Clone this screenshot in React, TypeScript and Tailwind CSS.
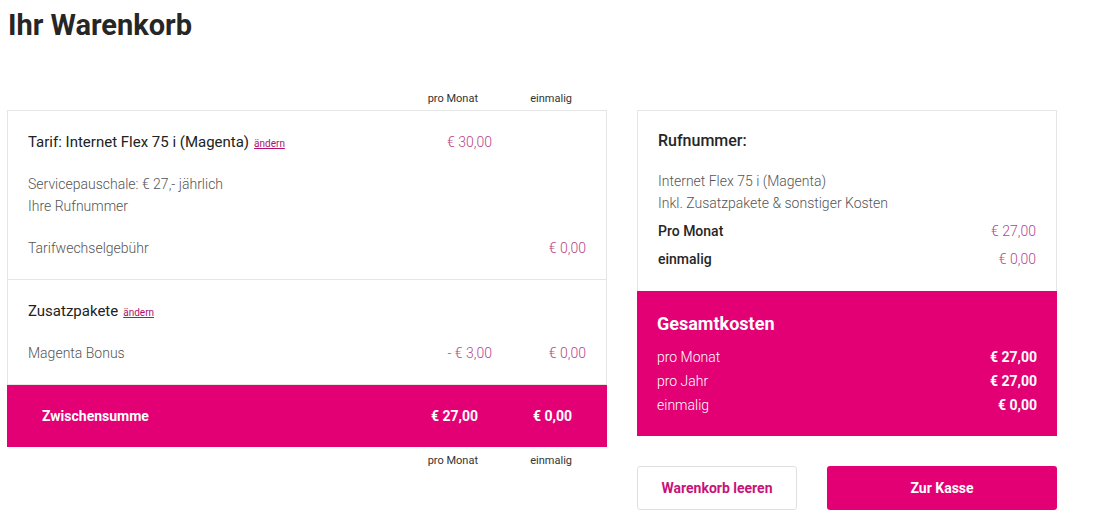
import React from "react";

const price = "text-[#b8448a] font-light";

function ColLabels({ className = "" }: { className?: string }) {
  return (
    <div className={`flex justify-end pr-[35px] text-[11px] text-[#333] ${className}`}>
      <span className="w-[94px] text-right">pro Monat</span>
      <span className="w-[94px] text-right">einmalig</span>
    </div>
  );
}

function Row({
  label,
  month,
  once,
  className = "",
  labelClass = "",
}: {
  label: React.ReactNode;
  month?: string;
  once?: string;
  className?: string;
  labelClass?: string;
}) {
  return (
    <div className={`flex h-[22px] items-center ${className}`}>
      <div className={`flex-1 flex items-baseline ${labelClass}`}>{label}</div>
      <div className={`w-[94px] text-right ${price}`}>{month}</div>
      <div className={`w-[94px] text-right ${price}`}>{once}</div>
    </div>
  );
}

function Aendern() {
  return (
    <a className="ml-[5px] text-[10px] text-[#b0106e] underline font-normal">
      ändern
    </a>
  );
}

export default function App() {
  return (
    <div className="min-h-screen bg-white font-['Roboto','Liberation_Sans',sans-serif] text-[14px] text-[#333]">
      <h1 className="pl-[8px] pt-[8px] text-[29px] font-bold leading-[34px] text-[#262626]">
        Ihr Warenkorb
      </h1>

      <div className="mt-[46px] flex gap-[30px] pl-[7px]">
        {/* left column */}
        <div className="w-[600px]">
          <ColLabels className="h-[22px] items-center" />
          <div className="border border-[#e6e6e6]">
            <div className="px-[20px] pt-[20px] pb-[20px]">
              <Row
                labelClass="text-[#222] text-[15px]"
                label={
                  <>
                    Tarif: Internet Flex 75 i (Magenta)
                    <Aendern />
                  </>
                }
                month="€ 30,00"
              />
              <div className="mt-[20px] font-light text-[#555] leading-[22px]">
                <div>Servicepauschale: € 27,- jährlich</div>
                <div>Ihre Rufnummer</div>
              </div>
              <Row
                className="mt-[20px]"
                labelClass="font-light text-[#555]"
                label="Tarifwechselgebühr"
                once="€ 0,00"
              />
            </div>
            <div className="border-t border-[#e6e6e6] px-[20px] pt-[20px] pb-[20px]">
              <Row
                labelClass="text-[#222] text-[15px]"
                label={
                  <>
                    Zusatzpakete
                    <Aendern />
                  </>
                }
              />
              <Row
                className="mt-[20px]"
                labelClass="font-light text-[#555]"
                label="Magenta Bonus"
                month="- € 3,00"
                once="€ 0,00"
              />
            </div>
          </div>
          <div className="flex h-[62px] items-center bg-[#e20074] pl-[35px] pr-[35px] text-white font-bold">
            <div className="flex-1">Zwischensumme</div>
            <div className="w-[94px] text-right">€ 27,00</div>
            <div className="w-[94px] text-right">€ 0,00</div>
          </div>
          <ColLabels className="mt-[6px] leading-[16px]" />
        </div>

        {/* right column */}
        <div className="mt-[22px] w-[420px]">
          <div className="border border-b-0 border-[#e6e6e6] px-[20px] pt-[19px] pb-[18px]">
            <div className="text-[16px] font-medium leading-[22px] text-[#262626]">
              Rufnummer:
            </div>
            <div className="mt-[18px] font-light leading-[22px] text-[#555]">
              <div>Internet Flex 75 i (Magenta)</div>
              <div>Inkl. Zusatzpakete &amp; sonstiger Kosten</div>
            </div>
            <div className="mt-[3px] flex justify-between leading-[28px]">
              <span className="font-medium text-[#262626]">Pro Monat</span>
              <span className={price}>€ 27,00</span>
            </div>
            <div className="flex justify-between leading-[28px]">
              <span className="font-medium text-[#262626]">einmalig</span>
              <span className={price}>€ 0,00</span>
            </div>
          </div>
          <div className="bg-[#e20074] px-[20px] pt-[21px] pb-[19px] text-white">
            <div className="text-[18px] font-bold leading-[24px]">Gesamtkosten</div>
            <div className="mt-[9px] leading-[24px]">
              {[
                ["pro Monat", "€ 27,00"],
                ["pro Jahr", "€ 27,00"],
                ["einmalig", "€ 0,00"],
              ].map(([l, v]) => (
                <div key={l} className="flex justify-between">
                  <span className="font-light">{l}</span>
                  <span className="font-bold">{v}</span>
                </div>
              ))}
            </div>
          </div>
          <div className="mt-[30px] flex gap-[30px]">
            <button className="h-[44px] w-[160px] rounded-[3px] border border-[#e0e0e0] bg-white text-[14px] font-bold text-[#c8137a]">
              Warenkorb leeren
            </button>
            <button className="h-[44px] flex-1 rounded-[3px] bg-[#e20074] text-[14px] font-bold text-white">
              Zur Kasse
            </button>
          </div>
        </div>
      </div>
    </div>
  );
}
